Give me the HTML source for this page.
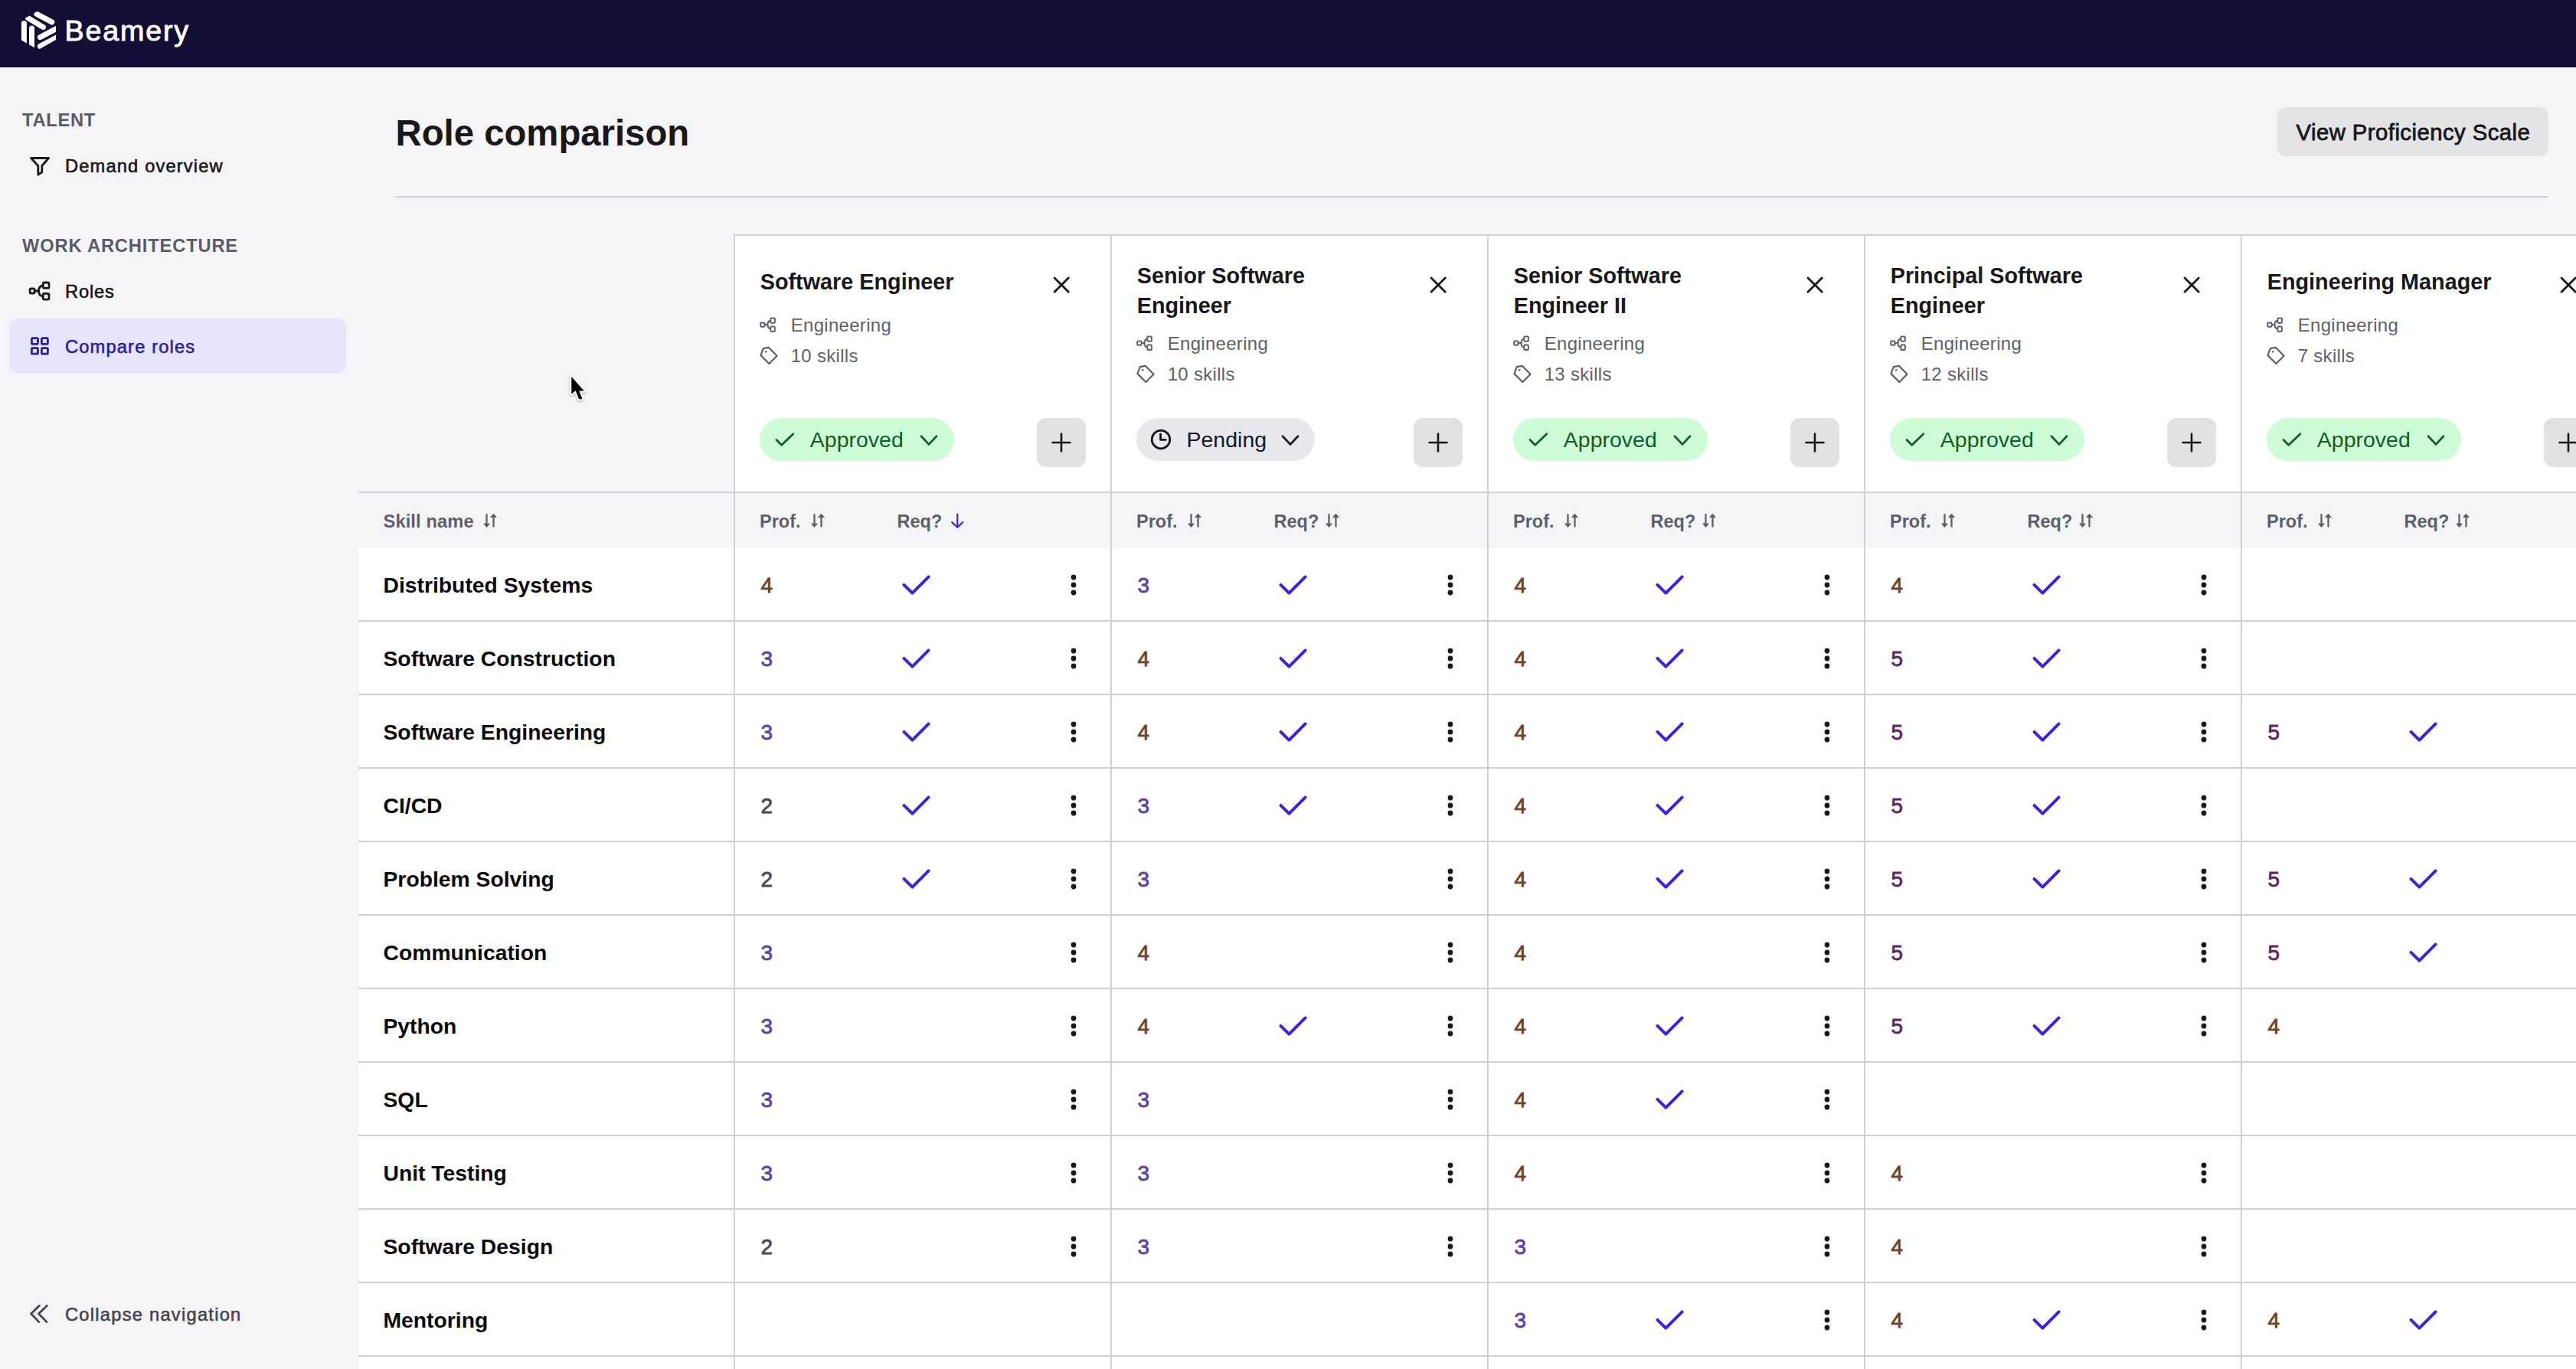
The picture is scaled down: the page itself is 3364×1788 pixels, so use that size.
<!DOCTYPE html>
<html><head><meta charset="utf-8"><title>Role comparison</title>
<style>
html,body{margin:0;padding:0;}
body{width:3364px;height:1788px;overflow:hidden;background:#f5f5f7;position:relative;font-family:"Liberation Sans", sans-serif;}
.t{position:absolute;white-space:nowrap;line-height:1;}
.b{position:absolute;}
.s{position:absolute;overflow:visible;}
</style></head><body>
<div class="b" style="left:0px;top:0px;width:3364px;height:88px;background:#130e36;border-radius:0px;"></div>
<svg class="s" style="left:0px;top:0px;" width="90" height="88" viewBox="0 0 90 88" fill="none"><defs><clipPath id="hx"><path d="M50 14 L73 27 L73 52 L50 65 L27 52 L27 27 Z"/></clipPath></defs>
<g clip-path="url(#hx)" stroke="#fff" stroke-width="7" stroke-linecap="round">
<line x1="48" y1="18.3" x2="67.8" y2="28.9"/>
<line x1="36.7" y1="23.6" x2="56.4" y2="35.4"/>
<line x1="31.4" y1="30.6" x2="31.4" y2="70"/>
<line x1="41.5" y1="37" x2="41.5" y2="75"/>
<line x1="52.4" y1="48.6" x2="80" y2="34"/>
<line x1="52.4" y1="60.4" x2="80" y2="45.8"/>
</g></svg>
<div class="t" style="left:84.5px;top:22.1px;font-size:37.7px;font-weight:400;color:#ffffff;letter-spacing:1.8px;-webkit-text-stroke:0.9px #ffffff;">Beamery</div>
<div class="t" style="left:29.0px;top:145.9px;font-size:23.7px;font-weight:700;color:#5b5b66;letter-spacing:0.7px;">TALENT</div>
<svg class="s" style="left:30px;top:195px;" width="50" height="45" viewBox="0 0 50 45" fill="none"><path d="M10.5 11.5 H33.5 L24.8 21.5 V29.8 L19.8 33.2 V21.5 Z" stroke="#18181b" stroke-width="2.8" stroke-linejoin="round"/></svg>
<div class="t" style="left:85.0px;top:205.9px;font-size:23.7px;font-weight:400;color:#18181b;letter-spacing:1.15px;-webkit-text-stroke:0.6px #18181b;">Demand overview</div>
<div class="t" style="left:29.0px;top:309.9px;font-size:23.7px;font-weight:700;color:#5b5b66;letter-spacing:0.85px;">WORK ARCHITECTURE</div>
<svg class="s" style="left:30px;top:360px;" width="45" height="40" viewBox="0 0 45 40" fill="none"><rect x="9.1" y="16.9" width="6" height="6.3" rx="1.6" stroke="#18181b" stroke-width="2.8"/><rect x="26.3" y="9" width="7.7" height="7.4" rx="1.6" stroke="#18181b" stroke-width="2.8"/><rect x="26.3" y="23.3" width="7.7" height="7.8" rx="1.6" stroke="#18181b" stroke-width="2.8"/><path d="M15.1 20 H20.5 M26.3 12.7 C22 13.5 20.5 15.5 20.5 20 C20.5 24.5 22 26.5 26.3 27.2" stroke="#18181b" stroke-width="2.8"/></svg>
<div class="t" style="left:85.0px;top:370.4px;font-size:23.7px;font-weight:400;color:#18181b;letter-spacing:0.8px;-webkit-text-stroke:0.6px #18181b;">Roles</div>
<div class="b" style="left:12px;top:416px;width:440px;height:72px;background:#e7e5fb;border-radius:12px;"></div>
<svg class="s" style="left:30px;top:432px;" width="45" height="40" viewBox="0 0 45 40" fill="none"><rect x="11.4" y="9.7" width="8" height="7.6" rx="1.2" stroke="#2b1f9e" stroke-width="2.8"/><rect x="11.4" y="22.6" width="8" height="7.6" rx="1.2" stroke="#2b1f9e" stroke-width="2.8"/><rect x="24.4" y="9.7" width="8" height="7.6" rx="1.2" stroke="#2b1f9e" stroke-width="2.8"/><rect x="24.4" y="22.6" width="8" height="7.6" rx="1.2" stroke="#2b1f9e" stroke-width="2.8"/></svg>
<div class="t" style="left:85.0px;top:441.9px;font-size:23.7px;font-weight:400;color:#2b1f9e;letter-spacing:1.15px;-webkit-text-stroke:0.6px #2b1f9e;">Compare roles</div>
<svg class="s" style="left:30px;top:1695px;" width="50" height="45" viewBox="0 0 50 45" fill="none"><path d="M21.4 10.2 L10.5 20.7 L21 31.6 M31.4 10.2 L20.5 20.7 L31 31.6" stroke="#45454f" stroke-width="2.8" stroke-linecap="round" stroke-linejoin="round"/></svg>
<div class="t" style="left:85.0px;top:1706.4px;font-size:23.7px;font-weight:400;color:#45454f;letter-spacing:1.25px;-webkit-text-stroke:0.6px #45454f;">Collapse navigation</div>
<div class="t" style="left:516.5px;top:150.0px;font-size:47.3px;font-weight:700;color:#18181b;letter-spacing:0px;">Role comparison</div>
<div class="b" style="left:516px;top:256px;width:2812px;height:2px;background:#d1d1d5;border-radius:0px;"></div>
<div class="b" style="left:2974px;top:140px;width:354px;height:64px;background:#e4e4e7;border-radius:12px;"></div>
<div class="t" style="left:2998.5px;top:157.6px;font-size:29.3px;font-weight:400;color:#18181b;letter-spacing:0.45px;-webkit-text-stroke:0.8px #18181b;">View Proficiency Scale</div>
<div class="b" style="left:958px;top:306px;width:2406px;height:338px;background:#ffffff;border-radius:0px;"></div>
<div class="b" style="left:468px;top:644px;width:2896px;height:72px;background:#f5f5f7;border-radius:0px;"></div>
<div class="b" style="left:468px;top:716px;width:2896px;height:1072px;background:#ffffff;border-radius:0px;"></div>
<div class="b" style="left:958px;top:306px;width:2406px;height:2px;background:#d1d1d5;border-radius:0px;"></div>
<div class="b" style="left:468px;top:642px;width:2896px;height:2px;background:#d1d1d5;border-radius:0px;"></div>
<div class="b" style="left:468px;top:810px;width:2896px;height:2px;background:#d1d1d5;border-radius:0px;"></div>
<div class="b" style="left:468px;top:906px;width:2896px;height:2px;background:#d1d1d5;border-radius:0px;"></div>
<div class="b" style="left:468px;top:1002px;width:2896px;height:2px;background:#d1d1d5;border-radius:0px;"></div>
<div class="b" style="left:468px;top:1098px;width:2896px;height:2px;background:#d1d1d5;border-radius:0px;"></div>
<div class="b" style="left:468px;top:1194px;width:2896px;height:2px;background:#d1d1d5;border-radius:0px;"></div>
<div class="b" style="left:468px;top:1290px;width:2896px;height:2px;background:#d1d1d5;border-radius:0px;"></div>
<div class="b" style="left:468px;top:1386px;width:2896px;height:2px;background:#d1d1d5;border-radius:0px;"></div>
<div class="b" style="left:468px;top:1482px;width:2896px;height:2px;background:#d1d1d5;border-radius:0px;"></div>
<div class="b" style="left:468px;top:1578px;width:2896px;height:2px;background:#d1d1d5;border-radius:0px;"></div>
<div class="b" style="left:468px;top:1674px;width:2896px;height:2px;background:#d1d1d5;border-radius:0px;"></div>
<div class="b" style="left:468px;top:1770px;width:2896px;height:2px;background:#d1d1d5;border-radius:0px;"></div>
<div class="b" style="left:958px;top:306px;width:2px;height:1482px;background:#d1d1d5;border-radius:0px;"></div>
<div class="b" style="left:1450px;top:306px;width:2px;height:1482px;background:#d1d1d5;border-radius:0px;"></div>
<div class="b" style="left:1942px;top:306px;width:2px;height:1482px;background:#d1d1d5;border-radius:0px;"></div>
<div class="b" style="left:2434px;top:306px;width:2px;height:1482px;background:#d1d1d5;border-radius:0px;"></div>
<div class="b" style="left:2926px;top:306px;width:2px;height:1482px;background:#d1d1d5;border-radius:0px;"></div>
<div class="t" style="left:992.7px;top:354.2px;font-size:28.8px;font-weight:700;color:#18181b;letter-spacing:0px;">Software Engineer</div>
<svg class="s" style="left:1374.8px;top:360.8px;" width="23" height="23" viewBox="0 0 23 23" fill="none"><path d="M2 2 L20.3 20.3 M20.3 2 L2 20.3" stroke="#18181b" stroke-width="2.8" stroke-linecap="round"/></svg>
<svg class="s" style="left:992px;top:413.5px;" width="22" height="21" viewBox="0 0 22 21" fill="none"><rect x="1.2" y="7.5" width="5.4" height="5.2" rx="1.2" stroke="#5f5f6a" stroke-width="2"/><rect x="14.3" y="1.4" width="5.6" height="6.3" rx="1.2" stroke="#5f5f6a" stroke-width="2"/><rect x="14.3" y="12.5" width="5.6" height="6.5" rx="1.2" stroke="#5f5f6a" stroke-width="2"/><path d="M6.6 10.1 H10.5 M14.3 4.5 C11.8 5 10.5 6.5 10.5 10.1 C10.5 13.7 11.8 15.2 14.3 15.7" stroke="#5f5f6a" stroke-width="2"/></svg>
<div class="t" style="left:1032.7px;top:412.7px;font-size:24px;font-weight:400;color:#5f5f6a;letter-spacing:0.3px;">Engineering</div>
<svg class="s" style="left:991.5px;top:451.5px;" width="25" height="25" viewBox="0 0 25 25" fill="none"><path d="M3.5 6.5 L4.8 3.2 L11.7 1.8 L22.6 12.8 L12.4 23 L1.5 12.1 Z" stroke="#5f5f6a" stroke-width="2.2" stroke-linejoin="round"/><circle cx="8.2" cy="7.3" r="1.3" fill="#5f5f6a"/></svg>
<div class="t" style="left:1032.7px;top:452.7px;font-size:24px;font-weight:400;color:#5f5f6a;letter-spacing:0.3px;">10 skills</div>
<div class="b" style="left:992px;top:546px;width:254px;height:56px;background:#cdfcd6;border-radius:28px;"></div>
<svg class="s" style="left:1012px;top:562px;" width="26" height="26" viewBox="0 0 26 26" fill="none"><path d="M2 12.5 L8.7 19.2 L23.8 4.7" stroke="#0f5e28" stroke-width="2.8" stroke-linecap="round" stroke-linejoin="round"/></svg>
<div class="t" style="left:1057.8px;top:559.7px;font-size:28.5px;font-weight:400;color:#0f5e28;letter-spacing:0px;">Approved</div>
<svg class="s" style="left:1200px;top:567px;" width="26" height="18" viewBox="0 0 26 18" fill="none"><path d="M3 2.8 L13 13.4 L23 2.8" stroke="#0f5e28" stroke-width="2.8" stroke-linecap="round" stroke-linejoin="round"/></svg>
<div class="b" style="left:1354px;top:546px;width:64px;height:64px;background:#e2e2e5;border-radius:12px;"></div>
<svg class="s" style="left:1354px;top:546px;" width="64" height="64" viewBox="0 0 64 64" fill="none"><path d="M20.5 32 H43.5 M32 20.5 V43.5" stroke="#18181b" stroke-width="2.6" stroke-linecap="round"/></svg>
<div class="t" style="left:992.0px;top:670.1px;font-size:23.5px;font-weight:700;color:#5f5f6a;letter-spacing:0px;">Prof.</div>
<svg class="s" style="left:1058px;top:670px;" width="20" height="20" viewBox="0 0 20 20" fill="none"><path d="M5.5 2.2 V15 M14.5 17.5 V5" stroke="#5f5f6a" stroke-width="2.3" stroke-linecap="round"/><path d="M2 14.2 H9 L5.5 18.2 Z M11 5.4 H18 L14.5 1.6 Z" fill="#5f5f6a" stroke="#5f5f6a" stroke-width="1.2" stroke-linejoin="round"/></svg>
<div class="t" style="left:1171.5px;top:670.1px;font-size:23.5px;font-weight:700;color:#5f5f6a;letter-spacing:0px;">Req?</div>
<svg class="s" style="left:1240px;top:669px;" width="20" height="22" viewBox="0 0 20 22" fill="none"><path d="M10.3 2.6 V19.8 M3.3 13.1 L10.3 19.8 L17.3 13.1" stroke="#3a22e6" stroke-width="2.2" stroke-linecap="round" stroke-linejoin="round"/></svg>
<div class="t" style="left:1484.7px;top:346.1px;font-size:28.8px;font-weight:700;color:#18181b;letter-spacing:0px;">Senior Software</div>
<div class="t" style="left:1484.7px;top:385.3px;font-size:28.8px;font-weight:700;color:#18181b;letter-spacing:0px;">Engineer</div>
<svg class="s" style="left:1866.8px;top:360.8px;" width="23" height="23" viewBox="0 0 23 23" fill="none"><path d="M2 2 L20.3 20.3 M20.3 2 L2 20.3" stroke="#18181b" stroke-width="2.8" stroke-linecap="round"/></svg>
<svg class="s" style="left:1484px;top:438.1px;" width="22" height="21" viewBox="0 0 22 21" fill="none"><rect x="1.2" y="7.5" width="5.4" height="5.2" rx="1.2" stroke="#5f5f6a" stroke-width="2"/><rect x="14.3" y="1.4" width="5.6" height="6.3" rx="1.2" stroke="#5f5f6a" stroke-width="2"/><rect x="14.3" y="12.5" width="5.6" height="6.5" rx="1.2" stroke="#5f5f6a" stroke-width="2"/><path d="M6.6 10.1 H10.5 M14.3 4.5 C11.8 5 10.5 6.5 10.5 10.1 C10.5 13.7 11.8 15.2 14.3 15.7" stroke="#5f5f6a" stroke-width="2"/></svg>
<div class="t" style="left:1524.7px;top:437.3px;font-size:24px;font-weight:400;color:#5f5f6a;letter-spacing:0.3px;">Engineering</div>
<svg class="s" style="left:1483.5px;top:475.5px;" width="25" height="25" viewBox="0 0 25 25" fill="none"><path d="M3.5 6.5 L4.8 3.2 L11.7 1.8 L22.6 12.8 L12.4 23 L1.5 12.1 Z" stroke="#5f5f6a" stroke-width="2.2" stroke-linejoin="round"/><circle cx="8.2" cy="7.3" r="1.3" fill="#5f5f6a"/></svg>
<div class="t" style="left:1524.7px;top:476.7px;font-size:24px;font-weight:400;color:#5f5f6a;letter-spacing:0.3px;">10 skills</div>
<div class="b" style="left:1484px;top:546px;width:233px;height:56px;background:#e8e8ec;border-radius:28px;"></div>
<svg class="s" style="left:1501px;top:559px;" width="30" height="30" viewBox="0 0 30 30" fill="none"><circle cx="15" cy="15" r="11.8" stroke="#18181b" stroke-width="2.8"/><path d="M14.6 8 V15.3 H21.3" stroke="#18181b" stroke-width="2.8" stroke-linecap="round" stroke-linejoin="round"/></svg>
<div class="t" style="left:1549.5px;top:559.7px;font-size:28.5px;font-weight:400;color:#18181b;letter-spacing:0px;">Pending</div>
<svg class="s" style="left:1672px;top:567px;" width="26" height="18" viewBox="0 0 26 18" fill="none"><path d="M3 2.8 L13 13.4 L23 2.8" stroke="#18181b" stroke-width="2.8" stroke-linecap="round" stroke-linejoin="round"/></svg>
<div class="b" style="left:1846px;top:546px;width:64px;height:64px;background:#e2e2e5;border-radius:12px;"></div>
<svg class="s" style="left:1846px;top:546px;" width="64" height="64" viewBox="0 0 64 64" fill="none"><path d="M20.5 32 H43.5 M32 20.5 V43.5" stroke="#18181b" stroke-width="2.6" stroke-linecap="round"/></svg>
<div class="t" style="left:1484.0px;top:670.1px;font-size:23.5px;font-weight:700;color:#5f5f6a;letter-spacing:0px;">Prof.</div>
<svg class="s" style="left:1550px;top:670px;" width="20" height="20" viewBox="0 0 20 20" fill="none"><path d="M5.5 2.2 V15 M14.5 17.5 V5" stroke="#5f5f6a" stroke-width="2.3" stroke-linecap="round"/><path d="M2 14.2 H9 L5.5 18.2 Z M11 5.4 H18 L14.5 1.6 Z" fill="#5f5f6a" stroke="#5f5f6a" stroke-width="1.2" stroke-linejoin="round"/></svg>
<div class="t" style="left:1663.5px;top:670.1px;font-size:23.5px;font-weight:700;color:#5f5f6a;letter-spacing:0px;">Req?</div>
<svg class="s" style="left:1730px;top:670px;" width="20" height="20" viewBox="0 0 20 20" fill="none"><path d="M5.5 2.2 V15 M14.5 17.5 V5" stroke="#5f5f6a" stroke-width="2.3" stroke-linecap="round"/><path d="M2 14.2 H9 L5.5 18.2 Z M11 5.4 H18 L14.5 1.6 Z" fill="#5f5f6a" stroke="#5f5f6a" stroke-width="1.2" stroke-linejoin="round"/></svg>
<div class="t" style="left:1976.7px;top:346.1px;font-size:28.8px;font-weight:700;color:#18181b;letter-spacing:0px;">Senior Software</div>
<div class="t" style="left:1976.7px;top:385.3px;font-size:28.8px;font-weight:700;color:#18181b;letter-spacing:0px;">Engineer II</div>
<svg class="s" style="left:2358.8px;top:360.8px;" width="23" height="23" viewBox="0 0 23 23" fill="none"><path d="M2 2 L20.3 20.3 M20.3 2 L2 20.3" stroke="#18181b" stroke-width="2.8" stroke-linecap="round"/></svg>
<svg class="s" style="left:1976px;top:438.1px;" width="22" height="21" viewBox="0 0 22 21" fill="none"><rect x="1.2" y="7.5" width="5.4" height="5.2" rx="1.2" stroke="#5f5f6a" stroke-width="2"/><rect x="14.3" y="1.4" width="5.6" height="6.3" rx="1.2" stroke="#5f5f6a" stroke-width="2"/><rect x="14.3" y="12.5" width="5.6" height="6.5" rx="1.2" stroke="#5f5f6a" stroke-width="2"/><path d="M6.6 10.1 H10.5 M14.3 4.5 C11.8 5 10.5 6.5 10.5 10.1 C10.5 13.7 11.8 15.2 14.3 15.7" stroke="#5f5f6a" stroke-width="2"/></svg>
<div class="t" style="left:2016.7px;top:437.3px;font-size:24px;font-weight:400;color:#5f5f6a;letter-spacing:0.3px;">Engineering</div>
<svg class="s" style="left:1975.5px;top:475.5px;" width="25" height="25" viewBox="0 0 25 25" fill="none"><path d="M3.5 6.5 L4.8 3.2 L11.7 1.8 L22.6 12.8 L12.4 23 L1.5 12.1 Z" stroke="#5f5f6a" stroke-width="2.2" stroke-linejoin="round"/><circle cx="8.2" cy="7.3" r="1.3" fill="#5f5f6a"/></svg>
<div class="t" style="left:2016.7px;top:476.7px;font-size:24px;font-weight:400;color:#5f5f6a;letter-spacing:0.3px;">13 skills</div>
<div class="b" style="left:1976px;top:546px;width:254px;height:56px;background:#cdfcd6;border-radius:28px;"></div>
<svg class="s" style="left:1996px;top:562px;" width="26" height="26" viewBox="0 0 26 26" fill="none"><path d="M2 12.5 L8.7 19.2 L23.8 4.7" stroke="#0f5e28" stroke-width="2.8" stroke-linecap="round" stroke-linejoin="round"/></svg>
<div class="t" style="left:2041.8px;top:559.7px;font-size:28.5px;font-weight:400;color:#0f5e28;letter-spacing:0px;">Approved</div>
<svg class="s" style="left:2184px;top:567px;" width="26" height="18" viewBox="0 0 26 18" fill="none"><path d="M3 2.8 L13 13.4 L23 2.8" stroke="#0f5e28" stroke-width="2.8" stroke-linecap="round" stroke-linejoin="round"/></svg>
<div class="b" style="left:2338px;top:546px;width:64px;height:64px;background:#e2e2e5;border-radius:12px;"></div>
<svg class="s" style="left:2338px;top:546px;" width="64" height="64" viewBox="0 0 64 64" fill="none"><path d="M20.5 32 H43.5 M32 20.5 V43.5" stroke="#18181b" stroke-width="2.6" stroke-linecap="round"/></svg>
<div class="t" style="left:1976.0px;top:670.1px;font-size:23.5px;font-weight:700;color:#5f5f6a;letter-spacing:0px;">Prof.</div>
<svg class="s" style="left:2042px;top:670px;" width="20" height="20" viewBox="0 0 20 20" fill="none"><path d="M5.5 2.2 V15 M14.5 17.5 V5" stroke="#5f5f6a" stroke-width="2.3" stroke-linecap="round"/><path d="M2 14.2 H9 L5.5 18.2 Z M11 5.4 H18 L14.5 1.6 Z" fill="#5f5f6a" stroke="#5f5f6a" stroke-width="1.2" stroke-linejoin="round"/></svg>
<div class="t" style="left:2155.5px;top:670.1px;font-size:23.5px;font-weight:700;color:#5f5f6a;letter-spacing:0px;">Req?</div>
<svg class="s" style="left:2222px;top:670px;" width="20" height="20" viewBox="0 0 20 20" fill="none"><path d="M5.5 2.2 V15 M14.5 17.5 V5" stroke="#5f5f6a" stroke-width="2.3" stroke-linecap="round"/><path d="M2 14.2 H9 L5.5 18.2 Z M11 5.4 H18 L14.5 1.6 Z" fill="#5f5f6a" stroke="#5f5f6a" stroke-width="1.2" stroke-linejoin="round"/></svg>
<div class="t" style="left:2468.7px;top:346.1px;font-size:28.8px;font-weight:700;color:#18181b;letter-spacing:0px;">Principal Software</div>
<div class="t" style="left:2468.7px;top:385.3px;font-size:28.8px;font-weight:700;color:#18181b;letter-spacing:0px;">Engineer</div>
<svg class="s" style="left:2850.8px;top:360.8px;" width="23" height="23" viewBox="0 0 23 23" fill="none"><path d="M2 2 L20.3 20.3 M20.3 2 L2 20.3" stroke="#18181b" stroke-width="2.8" stroke-linecap="round"/></svg>
<svg class="s" style="left:2468px;top:438.1px;" width="22" height="21" viewBox="0 0 22 21" fill="none"><rect x="1.2" y="7.5" width="5.4" height="5.2" rx="1.2" stroke="#5f5f6a" stroke-width="2"/><rect x="14.3" y="1.4" width="5.6" height="6.3" rx="1.2" stroke="#5f5f6a" stroke-width="2"/><rect x="14.3" y="12.5" width="5.6" height="6.5" rx="1.2" stroke="#5f5f6a" stroke-width="2"/><path d="M6.6 10.1 H10.5 M14.3 4.5 C11.8 5 10.5 6.5 10.5 10.1 C10.5 13.7 11.8 15.2 14.3 15.7" stroke="#5f5f6a" stroke-width="2"/></svg>
<div class="t" style="left:2508.7px;top:437.3px;font-size:24px;font-weight:400;color:#5f5f6a;letter-spacing:0.3px;">Engineering</div>
<svg class="s" style="left:2467.5px;top:475.5px;" width="25" height="25" viewBox="0 0 25 25" fill="none"><path d="M3.5 6.5 L4.8 3.2 L11.7 1.8 L22.6 12.8 L12.4 23 L1.5 12.1 Z" stroke="#5f5f6a" stroke-width="2.2" stroke-linejoin="round"/><circle cx="8.2" cy="7.3" r="1.3" fill="#5f5f6a"/></svg>
<div class="t" style="left:2508.7px;top:476.7px;font-size:24px;font-weight:400;color:#5f5f6a;letter-spacing:0.3px;">12 skills</div>
<div class="b" style="left:2468px;top:546px;width:254px;height:56px;background:#cdfcd6;border-radius:28px;"></div>
<svg class="s" style="left:2488px;top:562px;" width="26" height="26" viewBox="0 0 26 26" fill="none"><path d="M2 12.5 L8.7 19.2 L23.8 4.7" stroke="#0f5e28" stroke-width="2.8" stroke-linecap="round" stroke-linejoin="round"/></svg>
<div class="t" style="left:2533.8px;top:559.7px;font-size:28.5px;font-weight:400;color:#0f5e28;letter-spacing:0px;">Approved</div>
<svg class="s" style="left:2676px;top:567px;" width="26" height="18" viewBox="0 0 26 18" fill="none"><path d="M3 2.8 L13 13.4 L23 2.8" stroke="#0f5e28" stroke-width="2.8" stroke-linecap="round" stroke-linejoin="round"/></svg>
<div class="b" style="left:2830px;top:546px;width:64px;height:64px;background:#e2e2e5;border-radius:12px;"></div>
<svg class="s" style="left:2830px;top:546px;" width="64" height="64" viewBox="0 0 64 64" fill="none"><path d="M20.5 32 H43.5 M32 20.5 V43.5" stroke="#18181b" stroke-width="2.6" stroke-linecap="round"/></svg>
<div class="t" style="left:2468.0px;top:670.1px;font-size:23.5px;font-weight:700;color:#5f5f6a;letter-spacing:0px;">Prof.</div>
<svg class="s" style="left:2534px;top:670px;" width="20" height="20" viewBox="0 0 20 20" fill="none"><path d="M5.5 2.2 V15 M14.5 17.5 V5" stroke="#5f5f6a" stroke-width="2.3" stroke-linecap="round"/><path d="M2 14.2 H9 L5.5 18.2 Z M11 5.4 H18 L14.5 1.6 Z" fill="#5f5f6a" stroke="#5f5f6a" stroke-width="1.2" stroke-linejoin="round"/></svg>
<div class="t" style="left:2647.5px;top:670.1px;font-size:23.5px;font-weight:700;color:#5f5f6a;letter-spacing:0px;">Req?</div>
<svg class="s" style="left:2714px;top:670px;" width="20" height="20" viewBox="0 0 20 20" fill="none"><path d="M5.5 2.2 V15 M14.5 17.5 V5" stroke="#5f5f6a" stroke-width="2.3" stroke-linecap="round"/><path d="M2 14.2 H9 L5.5 18.2 Z M11 5.4 H18 L14.5 1.6 Z" fill="#5f5f6a" stroke="#5f5f6a" stroke-width="1.2" stroke-linejoin="round"/></svg>
<div class="t" style="left:2960.7px;top:354.2px;font-size:28.8px;font-weight:700;color:#18181b;letter-spacing:0px;">Engineering Manager</div>
<svg class="s" style="left:3342.8px;top:360.8px;" width="23" height="23" viewBox="0 0 23 23" fill="none"><path d="M2 2 L20.3 20.3 M20.3 2 L2 20.3" stroke="#18181b" stroke-width="2.8" stroke-linecap="round"/></svg>
<svg class="s" style="left:2960px;top:413.5px;" width="22" height="21" viewBox="0 0 22 21" fill="none"><rect x="1.2" y="7.5" width="5.4" height="5.2" rx="1.2" stroke="#5f5f6a" stroke-width="2"/><rect x="14.3" y="1.4" width="5.6" height="6.3" rx="1.2" stroke="#5f5f6a" stroke-width="2"/><rect x="14.3" y="12.5" width="5.6" height="6.5" rx="1.2" stroke="#5f5f6a" stroke-width="2"/><path d="M6.6 10.1 H10.5 M14.3 4.5 C11.8 5 10.5 6.5 10.5 10.1 C10.5 13.7 11.8 15.2 14.3 15.7" stroke="#5f5f6a" stroke-width="2"/></svg>
<div class="t" style="left:3000.7px;top:412.7px;font-size:24px;font-weight:400;color:#5f5f6a;letter-spacing:0.3px;">Engineering</div>
<svg class="s" style="left:2959.5px;top:451.5px;" width="25" height="25" viewBox="0 0 25 25" fill="none"><path d="M3.5 6.5 L4.8 3.2 L11.7 1.8 L22.6 12.8 L12.4 23 L1.5 12.1 Z" stroke="#5f5f6a" stroke-width="2.2" stroke-linejoin="round"/><circle cx="8.2" cy="7.3" r="1.3" fill="#5f5f6a"/></svg>
<div class="t" style="left:3000.7px;top:452.7px;font-size:24px;font-weight:400;color:#5f5f6a;letter-spacing:0.3px;">7 skills</div>
<div class="b" style="left:2960px;top:546px;width:254px;height:56px;background:#cdfcd6;border-radius:28px;"></div>
<svg class="s" style="left:2980px;top:562px;" width="26" height="26" viewBox="0 0 26 26" fill="none"><path d="M2 12.5 L8.7 19.2 L23.8 4.7" stroke="#0f5e28" stroke-width="2.8" stroke-linecap="round" stroke-linejoin="round"/></svg>
<div class="t" style="left:3025.8px;top:559.7px;font-size:28.5px;font-weight:400;color:#0f5e28;letter-spacing:0px;">Approved</div>
<svg class="s" style="left:3168px;top:567px;" width="26" height="18" viewBox="0 0 26 18" fill="none"><path d="M3 2.8 L13 13.4 L23 2.8" stroke="#0f5e28" stroke-width="2.8" stroke-linecap="round" stroke-linejoin="round"/></svg>
<div class="b" style="left:3322px;top:546px;width:64px;height:64px;background:#e2e2e5;border-radius:12px;"></div>
<svg class="s" style="left:3322px;top:546px;" width="64" height="64" viewBox="0 0 64 64" fill="none"><path d="M20.5 32 H43.5 M32 20.5 V43.5" stroke="#18181b" stroke-width="2.6" stroke-linecap="round"/></svg>
<div class="t" style="left:2960.0px;top:670.1px;font-size:23.5px;font-weight:700;color:#5f5f6a;letter-spacing:0px;">Prof.</div>
<svg class="s" style="left:3026px;top:670px;" width="20" height="20" viewBox="0 0 20 20" fill="none"><path d="M5.5 2.2 V15 M14.5 17.5 V5" stroke="#5f5f6a" stroke-width="2.3" stroke-linecap="round"/><path d="M2 14.2 H9 L5.5 18.2 Z M11 5.4 H18 L14.5 1.6 Z" fill="#5f5f6a" stroke="#5f5f6a" stroke-width="1.2" stroke-linejoin="round"/></svg>
<div class="t" style="left:3139.5px;top:670.1px;font-size:23.5px;font-weight:700;color:#5f5f6a;letter-spacing:0px;">Req?</div>
<svg class="s" style="left:3206px;top:670px;" width="20" height="20" viewBox="0 0 20 20" fill="none"><path d="M5.5 2.2 V15 M14.5 17.5 V5" stroke="#5f5f6a" stroke-width="2.3" stroke-linecap="round"/><path d="M2 14.2 H9 L5.5 18.2 Z M11 5.4 H18 L14.5 1.6 Z" fill="#5f5f6a" stroke="#5f5f6a" stroke-width="1.2" stroke-linejoin="round"/></svg>
<div class="t" style="left:500.5px;top:669.9px;font-size:23.7px;font-weight:700;color:#5f5f6a;letter-spacing:0.1px;">Skill name</div>
<svg class="s" style="left:630px;top:670px;" width="20" height="20" viewBox="0 0 20 20" fill="none"><path d="M5.5 2.2 V15 M14.5 17.5 V5" stroke="#5f5f6a" stroke-width="2.3" stroke-linecap="round"/><path d="M2 14.2 H9 L5.5 18.2 Z M11 5.4 H18 L14.5 1.6 Z" fill="#5f5f6a" stroke="#5f5f6a" stroke-width="1.2" stroke-linejoin="round"/></svg>
<div class="t" style="left:500.5px;top:750.3px;font-size:28.3px;font-weight:700;color:#0a0a0c;letter-spacing:0px;">Distributed Systems</div>
<div class="t" style="left:993.4px;top:750.5px;font-size:28px;font-weight:400;color:#723f30;letter-spacing:0px;-webkit-text-stroke:0.8px #723f30;">4</div>
<svg class="s" style="left:1178px;top:752px;" width="38" height="26" viewBox="0 0 38 26" fill="none"><path d="M2.5 11.9 L13.4 22.7 L34.6 1.4" stroke="#3a22e6" stroke-width="4" stroke-linecap="round" stroke-linejoin="round"/></svg>
<svg class="s" style="left:1398px;top:749.7px;" width="8" height="28" viewBox="0 0 8 28" fill="none"><circle cx="4" cy="4" r="3.4" fill="#18181b"/><circle cx="4" cy="14" r="3.4" fill="#18181b"/><circle cx="4" cy="24" r="3.4" fill="#18181b"/></svg>
<div class="t" style="left:1485.4px;top:750.5px;font-size:28px;font-weight:400;color:#603eae;letter-spacing:0px;-webkit-text-stroke:0.8px #603eae;">3</div>
<svg class="s" style="left:1670px;top:752px;" width="38" height="26" viewBox="0 0 38 26" fill="none"><path d="M2.5 11.9 L13.4 22.7 L34.6 1.4" stroke="#3a22e6" stroke-width="4" stroke-linecap="round" stroke-linejoin="round"/></svg>
<svg class="s" style="left:1890px;top:749.7px;" width="8" height="28" viewBox="0 0 8 28" fill="none"><circle cx="4" cy="4" r="3.4" fill="#18181b"/><circle cx="4" cy="14" r="3.4" fill="#18181b"/><circle cx="4" cy="24" r="3.4" fill="#18181b"/></svg>
<div class="t" style="left:1977.4px;top:750.5px;font-size:28px;font-weight:400;color:#723f30;letter-spacing:0px;-webkit-text-stroke:0.8px #723f30;">4</div>
<svg class="s" style="left:2162px;top:752px;" width="38" height="26" viewBox="0 0 38 26" fill="none"><path d="M2.5 11.9 L13.4 22.7 L34.6 1.4" stroke="#3a22e6" stroke-width="4" stroke-linecap="round" stroke-linejoin="round"/></svg>
<svg class="s" style="left:2382px;top:749.7px;" width="8" height="28" viewBox="0 0 8 28" fill="none"><circle cx="4" cy="4" r="3.4" fill="#18181b"/><circle cx="4" cy="14" r="3.4" fill="#18181b"/><circle cx="4" cy="24" r="3.4" fill="#18181b"/></svg>
<div class="t" style="left:2469.4px;top:750.5px;font-size:28px;font-weight:400;color:#723f30;letter-spacing:0px;-webkit-text-stroke:0.8px #723f30;">4</div>
<svg class="s" style="left:2654px;top:752px;" width="38" height="26" viewBox="0 0 38 26" fill="none"><path d="M2.5 11.9 L13.4 22.7 L34.6 1.4" stroke="#3a22e6" stroke-width="4" stroke-linecap="round" stroke-linejoin="round"/></svg>
<svg class="s" style="left:2874px;top:749.7px;" width="8" height="28" viewBox="0 0 8 28" fill="none"><circle cx="4" cy="4" r="3.4" fill="#18181b"/><circle cx="4" cy="14" r="3.4" fill="#18181b"/><circle cx="4" cy="24" r="3.4" fill="#18181b"/></svg>
<div class="t" style="left:500.5px;top:846.3px;font-size:28.3px;font-weight:700;color:#0a0a0c;letter-spacing:0px;">Software Construction</div>
<div class="t" style="left:993.4px;top:846.5px;font-size:28px;font-weight:400;color:#603eae;letter-spacing:0px;-webkit-text-stroke:0.8px #603eae;">3</div>
<svg class="s" style="left:1178px;top:848px;" width="38" height="26" viewBox="0 0 38 26" fill="none"><path d="M2.5 11.9 L13.4 22.7 L34.6 1.4" stroke="#3a22e6" stroke-width="4" stroke-linecap="round" stroke-linejoin="round"/></svg>
<svg class="s" style="left:1398px;top:845.7px;" width="8" height="28" viewBox="0 0 8 28" fill="none"><circle cx="4" cy="4" r="3.4" fill="#18181b"/><circle cx="4" cy="14" r="3.4" fill="#18181b"/><circle cx="4" cy="24" r="3.4" fill="#18181b"/></svg>
<div class="t" style="left:1485.4px;top:846.5px;font-size:28px;font-weight:400;color:#723f30;letter-spacing:0px;-webkit-text-stroke:0.8px #723f30;">4</div>
<svg class="s" style="left:1670px;top:848px;" width="38" height="26" viewBox="0 0 38 26" fill="none"><path d="M2.5 11.9 L13.4 22.7 L34.6 1.4" stroke="#3a22e6" stroke-width="4" stroke-linecap="round" stroke-linejoin="round"/></svg>
<svg class="s" style="left:1890px;top:845.7px;" width="8" height="28" viewBox="0 0 8 28" fill="none"><circle cx="4" cy="4" r="3.4" fill="#18181b"/><circle cx="4" cy="14" r="3.4" fill="#18181b"/><circle cx="4" cy="24" r="3.4" fill="#18181b"/></svg>
<div class="t" style="left:1977.4px;top:846.5px;font-size:28px;font-weight:400;color:#723f30;letter-spacing:0px;-webkit-text-stroke:0.8px #723f30;">4</div>
<svg class="s" style="left:2162px;top:848px;" width="38" height="26" viewBox="0 0 38 26" fill="none"><path d="M2.5 11.9 L13.4 22.7 L34.6 1.4" stroke="#3a22e6" stroke-width="4" stroke-linecap="round" stroke-linejoin="round"/></svg>
<svg class="s" style="left:2382px;top:845.7px;" width="8" height="28" viewBox="0 0 8 28" fill="none"><circle cx="4" cy="4" r="3.4" fill="#18181b"/><circle cx="4" cy="14" r="3.4" fill="#18181b"/><circle cx="4" cy="24" r="3.4" fill="#18181b"/></svg>
<div class="t" style="left:2469.4px;top:846.5px;font-size:28px;font-weight:400;color:#672263;letter-spacing:0px;-webkit-text-stroke:0.8px #672263;">5</div>
<svg class="s" style="left:2654px;top:848px;" width="38" height="26" viewBox="0 0 38 26" fill="none"><path d="M2.5 11.9 L13.4 22.7 L34.6 1.4" stroke="#3a22e6" stroke-width="4" stroke-linecap="round" stroke-linejoin="round"/></svg>
<svg class="s" style="left:2874px;top:845.7px;" width="8" height="28" viewBox="0 0 8 28" fill="none"><circle cx="4" cy="4" r="3.4" fill="#18181b"/><circle cx="4" cy="14" r="3.4" fill="#18181b"/><circle cx="4" cy="24" r="3.4" fill="#18181b"/></svg>
<div class="t" style="left:500.5px;top:942.3px;font-size:28.3px;font-weight:700;color:#0a0a0c;letter-spacing:0px;">Software Engineering</div>
<div class="t" style="left:993.4px;top:942.5px;font-size:28px;font-weight:400;color:#603eae;letter-spacing:0px;-webkit-text-stroke:0.8px #603eae;">3</div>
<svg class="s" style="left:1178px;top:944px;" width="38" height="26" viewBox="0 0 38 26" fill="none"><path d="M2.5 11.9 L13.4 22.7 L34.6 1.4" stroke="#3a22e6" stroke-width="4" stroke-linecap="round" stroke-linejoin="round"/></svg>
<svg class="s" style="left:1398px;top:941.7px;" width="8" height="28" viewBox="0 0 8 28" fill="none"><circle cx="4" cy="4" r="3.4" fill="#18181b"/><circle cx="4" cy="14" r="3.4" fill="#18181b"/><circle cx="4" cy="24" r="3.4" fill="#18181b"/></svg>
<div class="t" style="left:1485.4px;top:942.5px;font-size:28px;font-weight:400;color:#723f30;letter-spacing:0px;-webkit-text-stroke:0.8px #723f30;">4</div>
<svg class="s" style="left:1670px;top:944px;" width="38" height="26" viewBox="0 0 38 26" fill="none"><path d="M2.5 11.9 L13.4 22.7 L34.6 1.4" stroke="#3a22e6" stroke-width="4" stroke-linecap="round" stroke-linejoin="round"/></svg>
<svg class="s" style="left:1890px;top:941.7px;" width="8" height="28" viewBox="0 0 8 28" fill="none"><circle cx="4" cy="4" r="3.4" fill="#18181b"/><circle cx="4" cy="14" r="3.4" fill="#18181b"/><circle cx="4" cy="24" r="3.4" fill="#18181b"/></svg>
<div class="t" style="left:1977.4px;top:942.5px;font-size:28px;font-weight:400;color:#723f30;letter-spacing:0px;-webkit-text-stroke:0.8px #723f30;">4</div>
<svg class="s" style="left:2162px;top:944px;" width="38" height="26" viewBox="0 0 38 26" fill="none"><path d="M2.5 11.9 L13.4 22.7 L34.6 1.4" stroke="#3a22e6" stroke-width="4" stroke-linecap="round" stroke-linejoin="round"/></svg>
<svg class="s" style="left:2382px;top:941.7px;" width="8" height="28" viewBox="0 0 8 28" fill="none"><circle cx="4" cy="4" r="3.4" fill="#18181b"/><circle cx="4" cy="14" r="3.4" fill="#18181b"/><circle cx="4" cy="24" r="3.4" fill="#18181b"/></svg>
<div class="t" style="left:2469.4px;top:942.5px;font-size:28px;font-weight:400;color:#672263;letter-spacing:0px;-webkit-text-stroke:0.8px #672263;">5</div>
<svg class="s" style="left:2654px;top:944px;" width="38" height="26" viewBox="0 0 38 26" fill="none"><path d="M2.5 11.9 L13.4 22.7 L34.6 1.4" stroke="#3a22e6" stroke-width="4" stroke-linecap="round" stroke-linejoin="round"/></svg>
<svg class="s" style="left:2874px;top:941.7px;" width="8" height="28" viewBox="0 0 8 28" fill="none"><circle cx="4" cy="4" r="3.4" fill="#18181b"/><circle cx="4" cy="14" r="3.4" fill="#18181b"/><circle cx="4" cy="24" r="3.4" fill="#18181b"/></svg>
<div class="t" style="left:2961.4px;top:942.5px;font-size:28px;font-weight:400;color:#672263;letter-spacing:0px;-webkit-text-stroke:0.8px #672263;">5</div>
<svg class="s" style="left:3146px;top:944px;" width="38" height="26" viewBox="0 0 38 26" fill="none"><path d="M2.5 11.9 L13.4 22.7 L34.6 1.4" stroke="#3a22e6" stroke-width="4" stroke-linecap="round" stroke-linejoin="round"/></svg>
<svg class="s" style="left:3366px;top:941.7px;" width="8" height="28" viewBox="0 0 8 28" fill="none"><circle cx="4" cy="4" r="3.4" fill="#18181b"/><circle cx="4" cy="14" r="3.4" fill="#18181b"/><circle cx="4" cy="24" r="3.4" fill="#18181b"/></svg>
<div class="t" style="left:500.5px;top:1038.3px;font-size:28.3px;font-weight:700;color:#0a0a0c;letter-spacing:0px;">CI/CD</div>
<div class="t" style="left:993.4px;top:1038.5px;font-size:28px;font-weight:400;color:#4b4b58;letter-spacing:0px;-webkit-text-stroke:0.8px #4b4b58;">2</div>
<svg class="s" style="left:1178px;top:1040px;" width="38" height="26" viewBox="0 0 38 26" fill="none"><path d="M2.5 11.9 L13.4 22.7 L34.6 1.4" stroke="#3a22e6" stroke-width="4" stroke-linecap="round" stroke-linejoin="round"/></svg>
<svg class="s" style="left:1398px;top:1037.7px;" width="8" height="28" viewBox="0 0 8 28" fill="none"><circle cx="4" cy="4" r="3.4" fill="#18181b"/><circle cx="4" cy="14" r="3.4" fill="#18181b"/><circle cx="4" cy="24" r="3.4" fill="#18181b"/></svg>
<div class="t" style="left:1485.4px;top:1038.5px;font-size:28px;font-weight:400;color:#603eae;letter-spacing:0px;-webkit-text-stroke:0.8px #603eae;">3</div>
<svg class="s" style="left:1670px;top:1040px;" width="38" height="26" viewBox="0 0 38 26" fill="none"><path d="M2.5 11.9 L13.4 22.7 L34.6 1.4" stroke="#3a22e6" stroke-width="4" stroke-linecap="round" stroke-linejoin="round"/></svg>
<svg class="s" style="left:1890px;top:1037.7px;" width="8" height="28" viewBox="0 0 8 28" fill="none"><circle cx="4" cy="4" r="3.4" fill="#18181b"/><circle cx="4" cy="14" r="3.4" fill="#18181b"/><circle cx="4" cy="24" r="3.4" fill="#18181b"/></svg>
<div class="t" style="left:1977.4px;top:1038.5px;font-size:28px;font-weight:400;color:#723f30;letter-spacing:0px;-webkit-text-stroke:0.8px #723f30;">4</div>
<svg class="s" style="left:2162px;top:1040px;" width="38" height="26" viewBox="0 0 38 26" fill="none"><path d="M2.5 11.9 L13.4 22.7 L34.6 1.4" stroke="#3a22e6" stroke-width="4" stroke-linecap="round" stroke-linejoin="round"/></svg>
<svg class="s" style="left:2382px;top:1037.7px;" width="8" height="28" viewBox="0 0 8 28" fill="none"><circle cx="4" cy="4" r="3.4" fill="#18181b"/><circle cx="4" cy="14" r="3.4" fill="#18181b"/><circle cx="4" cy="24" r="3.4" fill="#18181b"/></svg>
<div class="t" style="left:2469.4px;top:1038.5px;font-size:28px;font-weight:400;color:#672263;letter-spacing:0px;-webkit-text-stroke:0.8px #672263;">5</div>
<svg class="s" style="left:2654px;top:1040px;" width="38" height="26" viewBox="0 0 38 26" fill="none"><path d="M2.5 11.9 L13.4 22.7 L34.6 1.4" stroke="#3a22e6" stroke-width="4" stroke-linecap="round" stroke-linejoin="round"/></svg>
<svg class="s" style="left:2874px;top:1037.7px;" width="8" height="28" viewBox="0 0 8 28" fill="none"><circle cx="4" cy="4" r="3.4" fill="#18181b"/><circle cx="4" cy="14" r="3.4" fill="#18181b"/><circle cx="4" cy="24" r="3.4" fill="#18181b"/></svg>
<div class="t" style="left:500.5px;top:1134.3px;font-size:28.3px;font-weight:700;color:#0a0a0c;letter-spacing:0px;">Problem Solving</div>
<div class="t" style="left:993.4px;top:1134.5px;font-size:28px;font-weight:400;color:#4b4b58;letter-spacing:0px;-webkit-text-stroke:0.8px #4b4b58;">2</div>
<svg class="s" style="left:1178px;top:1136px;" width="38" height="26" viewBox="0 0 38 26" fill="none"><path d="M2.5 11.9 L13.4 22.7 L34.6 1.4" stroke="#3a22e6" stroke-width="4" stroke-linecap="round" stroke-linejoin="round"/></svg>
<svg class="s" style="left:1398px;top:1133.7px;" width="8" height="28" viewBox="0 0 8 28" fill="none"><circle cx="4" cy="4" r="3.4" fill="#18181b"/><circle cx="4" cy="14" r="3.4" fill="#18181b"/><circle cx="4" cy="24" r="3.4" fill="#18181b"/></svg>
<div class="t" style="left:1485.4px;top:1134.5px;font-size:28px;font-weight:400;color:#603eae;letter-spacing:0px;-webkit-text-stroke:0.8px #603eae;">3</div>
<svg class="s" style="left:1890px;top:1133.7px;" width="8" height="28" viewBox="0 0 8 28" fill="none"><circle cx="4" cy="4" r="3.4" fill="#18181b"/><circle cx="4" cy="14" r="3.4" fill="#18181b"/><circle cx="4" cy="24" r="3.4" fill="#18181b"/></svg>
<div class="t" style="left:1977.4px;top:1134.5px;font-size:28px;font-weight:400;color:#723f30;letter-spacing:0px;-webkit-text-stroke:0.8px #723f30;">4</div>
<svg class="s" style="left:2162px;top:1136px;" width="38" height="26" viewBox="0 0 38 26" fill="none"><path d="M2.5 11.9 L13.4 22.7 L34.6 1.4" stroke="#3a22e6" stroke-width="4" stroke-linecap="round" stroke-linejoin="round"/></svg>
<svg class="s" style="left:2382px;top:1133.7px;" width="8" height="28" viewBox="0 0 8 28" fill="none"><circle cx="4" cy="4" r="3.4" fill="#18181b"/><circle cx="4" cy="14" r="3.4" fill="#18181b"/><circle cx="4" cy="24" r="3.4" fill="#18181b"/></svg>
<div class="t" style="left:2469.4px;top:1134.5px;font-size:28px;font-weight:400;color:#672263;letter-spacing:0px;-webkit-text-stroke:0.8px #672263;">5</div>
<svg class="s" style="left:2654px;top:1136px;" width="38" height="26" viewBox="0 0 38 26" fill="none"><path d="M2.5 11.9 L13.4 22.7 L34.6 1.4" stroke="#3a22e6" stroke-width="4" stroke-linecap="round" stroke-linejoin="round"/></svg>
<svg class="s" style="left:2874px;top:1133.7px;" width="8" height="28" viewBox="0 0 8 28" fill="none"><circle cx="4" cy="4" r="3.4" fill="#18181b"/><circle cx="4" cy="14" r="3.4" fill="#18181b"/><circle cx="4" cy="24" r="3.4" fill="#18181b"/></svg>
<div class="t" style="left:2961.4px;top:1134.5px;font-size:28px;font-weight:400;color:#672263;letter-spacing:0px;-webkit-text-stroke:0.8px #672263;">5</div>
<svg class="s" style="left:3146px;top:1136px;" width="38" height="26" viewBox="0 0 38 26" fill="none"><path d="M2.5 11.9 L13.4 22.7 L34.6 1.4" stroke="#3a22e6" stroke-width="4" stroke-linecap="round" stroke-linejoin="round"/></svg>
<svg class="s" style="left:3366px;top:1133.7px;" width="8" height="28" viewBox="0 0 8 28" fill="none"><circle cx="4" cy="4" r="3.4" fill="#18181b"/><circle cx="4" cy="14" r="3.4" fill="#18181b"/><circle cx="4" cy="24" r="3.4" fill="#18181b"/></svg>
<div class="t" style="left:500.5px;top:1230.3px;font-size:28.3px;font-weight:700;color:#0a0a0c;letter-spacing:0px;">Communication</div>
<div class="t" style="left:993.4px;top:1230.5px;font-size:28px;font-weight:400;color:#603eae;letter-spacing:0px;-webkit-text-stroke:0.8px #603eae;">3</div>
<svg class="s" style="left:1398px;top:1229.7px;" width="8" height="28" viewBox="0 0 8 28" fill="none"><circle cx="4" cy="4" r="3.4" fill="#18181b"/><circle cx="4" cy="14" r="3.4" fill="#18181b"/><circle cx="4" cy="24" r="3.4" fill="#18181b"/></svg>
<div class="t" style="left:1485.4px;top:1230.5px;font-size:28px;font-weight:400;color:#723f30;letter-spacing:0px;-webkit-text-stroke:0.8px #723f30;">4</div>
<svg class="s" style="left:1890px;top:1229.7px;" width="8" height="28" viewBox="0 0 8 28" fill="none"><circle cx="4" cy="4" r="3.4" fill="#18181b"/><circle cx="4" cy="14" r="3.4" fill="#18181b"/><circle cx="4" cy="24" r="3.4" fill="#18181b"/></svg>
<div class="t" style="left:1977.4px;top:1230.5px;font-size:28px;font-weight:400;color:#723f30;letter-spacing:0px;-webkit-text-stroke:0.8px #723f30;">4</div>
<svg class="s" style="left:2382px;top:1229.7px;" width="8" height="28" viewBox="0 0 8 28" fill="none"><circle cx="4" cy="4" r="3.4" fill="#18181b"/><circle cx="4" cy="14" r="3.4" fill="#18181b"/><circle cx="4" cy="24" r="3.4" fill="#18181b"/></svg>
<div class="t" style="left:2469.4px;top:1230.5px;font-size:28px;font-weight:400;color:#672263;letter-spacing:0px;-webkit-text-stroke:0.8px #672263;">5</div>
<svg class="s" style="left:2874px;top:1229.7px;" width="8" height="28" viewBox="0 0 8 28" fill="none"><circle cx="4" cy="4" r="3.4" fill="#18181b"/><circle cx="4" cy="14" r="3.4" fill="#18181b"/><circle cx="4" cy="24" r="3.4" fill="#18181b"/></svg>
<div class="t" style="left:2961.4px;top:1230.5px;font-size:28px;font-weight:400;color:#672263;letter-spacing:0px;-webkit-text-stroke:0.8px #672263;">5</div>
<svg class="s" style="left:3146px;top:1232px;" width="38" height="26" viewBox="0 0 38 26" fill="none"><path d="M2.5 11.9 L13.4 22.7 L34.6 1.4" stroke="#3a22e6" stroke-width="4" stroke-linecap="round" stroke-linejoin="round"/></svg>
<svg class="s" style="left:3366px;top:1229.7px;" width="8" height="28" viewBox="0 0 8 28" fill="none"><circle cx="4" cy="4" r="3.4" fill="#18181b"/><circle cx="4" cy="14" r="3.4" fill="#18181b"/><circle cx="4" cy="24" r="3.4" fill="#18181b"/></svg>
<div class="t" style="left:500.5px;top:1326.3px;font-size:28.3px;font-weight:700;color:#0a0a0c;letter-spacing:0px;">Python</div>
<div class="t" style="left:993.4px;top:1326.5px;font-size:28px;font-weight:400;color:#603eae;letter-spacing:0px;-webkit-text-stroke:0.8px #603eae;">3</div>
<svg class="s" style="left:1398px;top:1325.7px;" width="8" height="28" viewBox="0 0 8 28" fill="none"><circle cx="4" cy="4" r="3.4" fill="#18181b"/><circle cx="4" cy="14" r="3.4" fill="#18181b"/><circle cx="4" cy="24" r="3.4" fill="#18181b"/></svg>
<div class="t" style="left:1485.4px;top:1326.5px;font-size:28px;font-weight:400;color:#723f30;letter-spacing:0px;-webkit-text-stroke:0.8px #723f30;">4</div>
<svg class="s" style="left:1670px;top:1328px;" width="38" height="26" viewBox="0 0 38 26" fill="none"><path d="M2.5 11.9 L13.4 22.7 L34.6 1.4" stroke="#3a22e6" stroke-width="4" stroke-linecap="round" stroke-linejoin="round"/></svg>
<svg class="s" style="left:1890px;top:1325.7px;" width="8" height="28" viewBox="0 0 8 28" fill="none"><circle cx="4" cy="4" r="3.4" fill="#18181b"/><circle cx="4" cy="14" r="3.4" fill="#18181b"/><circle cx="4" cy="24" r="3.4" fill="#18181b"/></svg>
<div class="t" style="left:1977.4px;top:1326.5px;font-size:28px;font-weight:400;color:#723f30;letter-spacing:0px;-webkit-text-stroke:0.8px #723f30;">4</div>
<svg class="s" style="left:2162px;top:1328px;" width="38" height="26" viewBox="0 0 38 26" fill="none"><path d="M2.5 11.9 L13.4 22.7 L34.6 1.4" stroke="#3a22e6" stroke-width="4" stroke-linecap="round" stroke-linejoin="round"/></svg>
<svg class="s" style="left:2382px;top:1325.7px;" width="8" height="28" viewBox="0 0 8 28" fill="none"><circle cx="4" cy="4" r="3.4" fill="#18181b"/><circle cx="4" cy="14" r="3.4" fill="#18181b"/><circle cx="4" cy="24" r="3.4" fill="#18181b"/></svg>
<div class="t" style="left:2469.4px;top:1326.5px;font-size:28px;font-weight:400;color:#672263;letter-spacing:0px;-webkit-text-stroke:0.8px #672263;">5</div>
<svg class="s" style="left:2654px;top:1328px;" width="38" height="26" viewBox="0 0 38 26" fill="none"><path d="M2.5 11.9 L13.4 22.7 L34.6 1.4" stroke="#3a22e6" stroke-width="4" stroke-linecap="round" stroke-linejoin="round"/></svg>
<svg class="s" style="left:2874px;top:1325.7px;" width="8" height="28" viewBox="0 0 8 28" fill="none"><circle cx="4" cy="4" r="3.4" fill="#18181b"/><circle cx="4" cy="14" r="3.4" fill="#18181b"/><circle cx="4" cy="24" r="3.4" fill="#18181b"/></svg>
<div class="t" style="left:2961.4px;top:1326.5px;font-size:28px;font-weight:400;color:#723f30;letter-spacing:0px;-webkit-text-stroke:0.8px #723f30;">4</div>
<svg class="s" style="left:3366px;top:1325.7px;" width="8" height="28" viewBox="0 0 8 28" fill="none"><circle cx="4" cy="4" r="3.4" fill="#18181b"/><circle cx="4" cy="14" r="3.4" fill="#18181b"/><circle cx="4" cy="24" r="3.4" fill="#18181b"/></svg>
<div class="t" style="left:500.5px;top:1422.3px;font-size:28.3px;font-weight:700;color:#0a0a0c;letter-spacing:0px;">SQL</div>
<div class="t" style="left:993.4px;top:1422.5px;font-size:28px;font-weight:400;color:#603eae;letter-spacing:0px;-webkit-text-stroke:0.8px #603eae;">3</div>
<svg class="s" style="left:1398px;top:1421.7px;" width="8" height="28" viewBox="0 0 8 28" fill="none"><circle cx="4" cy="4" r="3.4" fill="#18181b"/><circle cx="4" cy="14" r="3.4" fill="#18181b"/><circle cx="4" cy="24" r="3.4" fill="#18181b"/></svg>
<div class="t" style="left:1485.4px;top:1422.5px;font-size:28px;font-weight:400;color:#603eae;letter-spacing:0px;-webkit-text-stroke:0.8px #603eae;">3</div>
<svg class="s" style="left:1890px;top:1421.7px;" width="8" height="28" viewBox="0 0 8 28" fill="none"><circle cx="4" cy="4" r="3.4" fill="#18181b"/><circle cx="4" cy="14" r="3.4" fill="#18181b"/><circle cx="4" cy="24" r="3.4" fill="#18181b"/></svg>
<div class="t" style="left:1977.4px;top:1422.5px;font-size:28px;font-weight:400;color:#723f30;letter-spacing:0px;-webkit-text-stroke:0.8px #723f30;">4</div>
<svg class="s" style="left:2162px;top:1424px;" width="38" height="26" viewBox="0 0 38 26" fill="none"><path d="M2.5 11.9 L13.4 22.7 L34.6 1.4" stroke="#3a22e6" stroke-width="4" stroke-linecap="round" stroke-linejoin="round"/></svg>
<svg class="s" style="left:2382px;top:1421.7px;" width="8" height="28" viewBox="0 0 8 28" fill="none"><circle cx="4" cy="4" r="3.4" fill="#18181b"/><circle cx="4" cy="14" r="3.4" fill="#18181b"/><circle cx="4" cy="24" r="3.4" fill="#18181b"/></svg>
<div class="t" style="left:500.5px;top:1518.3px;font-size:28.3px;font-weight:700;color:#0a0a0c;letter-spacing:0px;">Unit Testing</div>
<div class="t" style="left:993.4px;top:1518.5px;font-size:28px;font-weight:400;color:#603eae;letter-spacing:0px;-webkit-text-stroke:0.8px #603eae;">3</div>
<svg class="s" style="left:1398px;top:1517.7px;" width="8" height="28" viewBox="0 0 8 28" fill="none"><circle cx="4" cy="4" r="3.4" fill="#18181b"/><circle cx="4" cy="14" r="3.4" fill="#18181b"/><circle cx="4" cy="24" r="3.4" fill="#18181b"/></svg>
<div class="t" style="left:1485.4px;top:1518.5px;font-size:28px;font-weight:400;color:#603eae;letter-spacing:0px;-webkit-text-stroke:0.8px #603eae;">3</div>
<svg class="s" style="left:1890px;top:1517.7px;" width="8" height="28" viewBox="0 0 8 28" fill="none"><circle cx="4" cy="4" r="3.4" fill="#18181b"/><circle cx="4" cy="14" r="3.4" fill="#18181b"/><circle cx="4" cy="24" r="3.4" fill="#18181b"/></svg>
<div class="t" style="left:1977.4px;top:1518.5px;font-size:28px;font-weight:400;color:#723f30;letter-spacing:0px;-webkit-text-stroke:0.8px #723f30;">4</div>
<svg class="s" style="left:2382px;top:1517.7px;" width="8" height="28" viewBox="0 0 8 28" fill="none"><circle cx="4" cy="4" r="3.4" fill="#18181b"/><circle cx="4" cy="14" r="3.4" fill="#18181b"/><circle cx="4" cy="24" r="3.4" fill="#18181b"/></svg>
<div class="t" style="left:2469.4px;top:1518.5px;font-size:28px;font-weight:400;color:#723f30;letter-spacing:0px;-webkit-text-stroke:0.8px #723f30;">4</div>
<svg class="s" style="left:2874px;top:1517.7px;" width="8" height="28" viewBox="0 0 8 28" fill="none"><circle cx="4" cy="4" r="3.4" fill="#18181b"/><circle cx="4" cy="14" r="3.4" fill="#18181b"/><circle cx="4" cy="24" r="3.4" fill="#18181b"/></svg>
<div class="t" style="left:500.5px;top:1614.3px;font-size:28.3px;font-weight:700;color:#0a0a0c;letter-spacing:0px;">Software Design</div>
<div class="t" style="left:993.4px;top:1614.5px;font-size:28px;font-weight:400;color:#4b4b58;letter-spacing:0px;-webkit-text-stroke:0.8px #4b4b58;">2</div>
<svg class="s" style="left:1398px;top:1613.7px;" width="8" height="28" viewBox="0 0 8 28" fill="none"><circle cx="4" cy="4" r="3.4" fill="#18181b"/><circle cx="4" cy="14" r="3.4" fill="#18181b"/><circle cx="4" cy="24" r="3.4" fill="#18181b"/></svg>
<div class="t" style="left:1485.4px;top:1614.5px;font-size:28px;font-weight:400;color:#603eae;letter-spacing:0px;-webkit-text-stroke:0.8px #603eae;">3</div>
<svg class="s" style="left:1890px;top:1613.7px;" width="8" height="28" viewBox="0 0 8 28" fill="none"><circle cx="4" cy="4" r="3.4" fill="#18181b"/><circle cx="4" cy="14" r="3.4" fill="#18181b"/><circle cx="4" cy="24" r="3.4" fill="#18181b"/></svg>
<div class="t" style="left:1977.4px;top:1614.5px;font-size:28px;font-weight:400;color:#603eae;letter-spacing:0px;-webkit-text-stroke:0.8px #603eae;">3</div>
<svg class="s" style="left:2382px;top:1613.7px;" width="8" height="28" viewBox="0 0 8 28" fill="none"><circle cx="4" cy="4" r="3.4" fill="#18181b"/><circle cx="4" cy="14" r="3.4" fill="#18181b"/><circle cx="4" cy="24" r="3.4" fill="#18181b"/></svg>
<div class="t" style="left:2469.4px;top:1614.5px;font-size:28px;font-weight:400;color:#723f30;letter-spacing:0px;-webkit-text-stroke:0.8px #723f30;">4</div>
<svg class="s" style="left:2874px;top:1613.7px;" width="8" height="28" viewBox="0 0 8 28" fill="none"><circle cx="4" cy="4" r="3.4" fill="#18181b"/><circle cx="4" cy="14" r="3.4" fill="#18181b"/><circle cx="4" cy="24" r="3.4" fill="#18181b"/></svg>
<div class="t" style="left:500.5px;top:1710.3px;font-size:28.3px;font-weight:700;color:#0a0a0c;letter-spacing:0px;">Mentoring</div>
<div class="t" style="left:1977.4px;top:1710.5px;font-size:28px;font-weight:400;color:#603eae;letter-spacing:0px;-webkit-text-stroke:0.8px #603eae;">3</div>
<svg class="s" style="left:2162px;top:1712px;" width="38" height="26" viewBox="0 0 38 26" fill="none"><path d="M2.5 11.9 L13.4 22.7 L34.6 1.4" stroke="#3a22e6" stroke-width="4" stroke-linecap="round" stroke-linejoin="round"/></svg>
<svg class="s" style="left:2382px;top:1709.7px;" width="8" height="28" viewBox="0 0 8 28" fill="none"><circle cx="4" cy="4" r="3.4" fill="#18181b"/><circle cx="4" cy="14" r="3.4" fill="#18181b"/><circle cx="4" cy="24" r="3.4" fill="#18181b"/></svg>
<div class="t" style="left:2469.4px;top:1710.5px;font-size:28px;font-weight:400;color:#723f30;letter-spacing:0px;-webkit-text-stroke:0.8px #723f30;">4</div>
<svg class="s" style="left:2654px;top:1712px;" width="38" height="26" viewBox="0 0 38 26" fill="none"><path d="M2.5 11.9 L13.4 22.7 L34.6 1.4" stroke="#3a22e6" stroke-width="4" stroke-linecap="round" stroke-linejoin="round"/></svg>
<svg class="s" style="left:2874px;top:1709.7px;" width="8" height="28" viewBox="0 0 8 28" fill="none"><circle cx="4" cy="4" r="3.4" fill="#18181b"/><circle cx="4" cy="14" r="3.4" fill="#18181b"/><circle cx="4" cy="24" r="3.4" fill="#18181b"/></svg>
<div class="t" style="left:2961.4px;top:1710.5px;font-size:28px;font-weight:400;color:#723f30;letter-spacing:0px;-webkit-text-stroke:0.8px #723f30;">4</div>
<svg class="s" style="left:3146px;top:1712px;" width="38" height="26" viewBox="0 0 38 26" fill="none"><path d="M2.5 11.9 L13.4 22.7 L34.6 1.4" stroke="#3a22e6" stroke-width="4" stroke-linecap="round" stroke-linejoin="round"/></svg>
<svg class="s" style="left:3366px;top:1709.7px;" width="8" height="28" viewBox="0 0 8 28" fill="none"><circle cx="4" cy="4" r="3.4" fill="#18181b"/><circle cx="4" cy="14" r="3.4" fill="#18181b"/><circle cx="4" cy="24" r="3.4" fill="#18181b"/></svg>
<svg class="s" style="left:720px;top:470px;filter:drop-shadow(0 1px 1.2px rgba(0,0,0,.35));" width="80" height="70" viewBox="0 0 80 70" fill="none"><path d="M26.3 22 V44.8 L31.6 40.2 L35.4 49.8 C36 51.6 38.2 52.2 39.6 51 L40.2 50.2 L36.4 40.6 H42.8 Z" fill="#fff" stroke="#fff" stroke-width="4.4" stroke-linejoin="round"/><path d="M26.3 22 V44.8 L31.6 40.2 L35.4 49.8 C36 51.6 38.2 52.2 39.6 51 L40.2 50.2 L36.4 40.6 H42.8 Z" fill="#000"/></svg>
</body></html>
